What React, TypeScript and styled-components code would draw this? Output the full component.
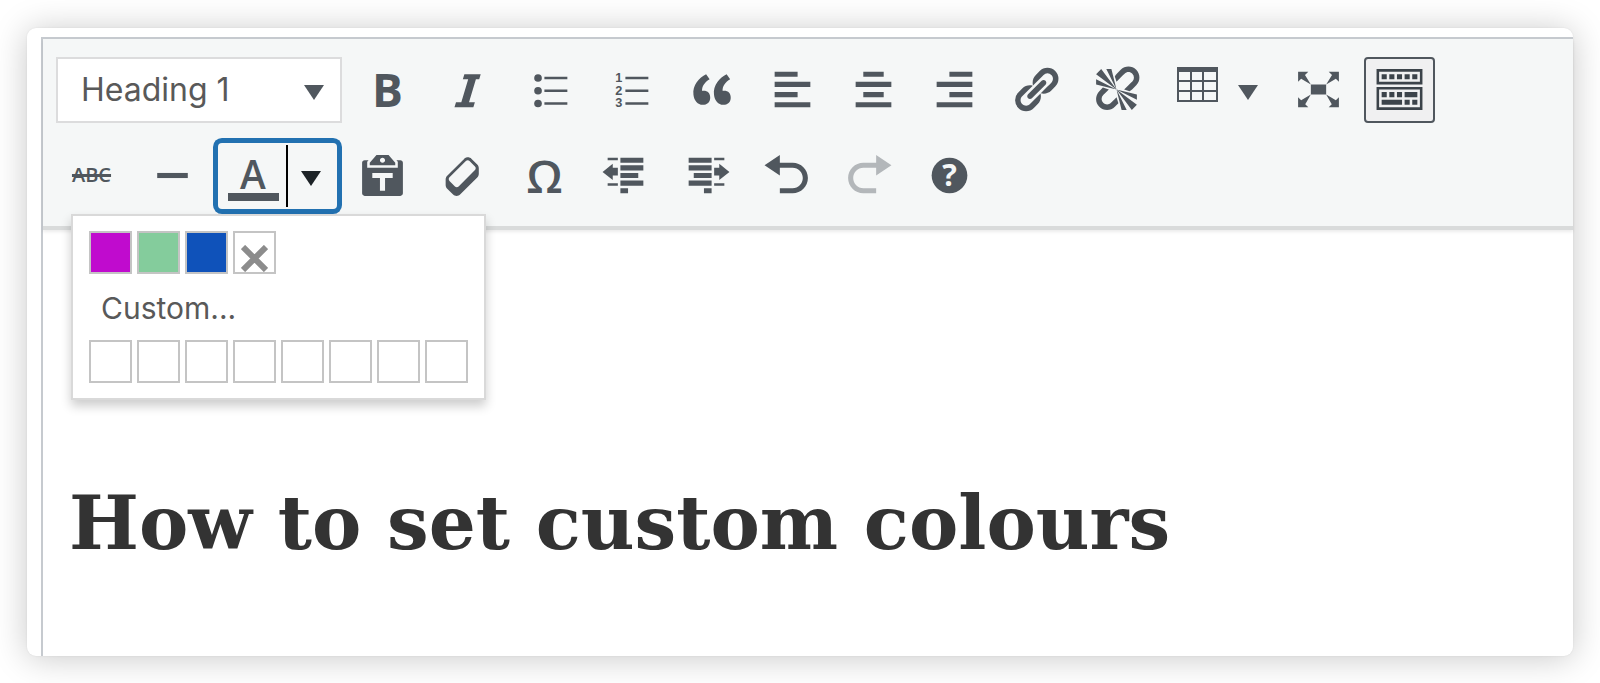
import React from "react";
import styled, { createGlobalStyle } from "styled-components";

const ink = "#50575e";

const GlobalStyle = createGlobalStyle`
  * { box-sizing: border-box; }
  body {
    margin: 0;
    background: #fff;
    font-family: Inter, "Liberation Sans", sans-serif;
  }
`;

const Page = styled.main`
  padding: 28px 27px 27px;
`;

const Card = styled.section`
  padding: 9px 0 0 14px;
  border-radius: 9px;
  background: #fff;
  box-shadow: 0 2px 34px rgba(0, 0, 0, 0.22), 0 0 2px rgba(0, 0, 0, 0.08);
`;

const Editor = styled.div`
  border: solid #c6cacf;
  border-width: 2px 0 0 2px;
`;

const Toolbar = styled.div`
  position: relative;
  display: flex;
  flex-direction: column;
  gap: 20px;
  padding: 18px 13px 17px;
  background: #f5f7f7;
  border-bottom: 4px solid #d9dbdb;
  box-shadow: 0 2px 3px rgba(0, 0, 0, 0.08);
`;

const Row = styled.div`
  display: flex;
  gap: 10px;
`;

const FormatBox = styled.div`
  position: relative;
  width: 286px;
  height: 66px;

  svg {
    position: absolute;
    right: 18px;
    top: 24px;
    pointer-events: none;
  }
`;

const FormatSelect = styled.select`
  width: 100%;
  height: 100%;
  padding: 0 50px 2px 23px;
  appearance: none;
  border: 2px solid #dcdcdd;
  border-radius: 0;
  background: #fff;
  color: #595959;
  font-family: inherit;
  font-size: 32px;
`;

const ToolButton = styled.button<{ $active?: boolean }>`
  display: flex;
  flex: none;
  align-items: flex-start;
  justify-content: center;
  width: 71px;
  height: 66px;
  padding: ${(p) => (p.$active ? 5 : 7)}px 0 0;
  border: ${(p) => (p.$active ? `2px solid ${ink}` : "none")};
  border-radius: 4px;
  background: ${(p) => (p.$active ? "#f0f0f1" : "transparent")};
  color: ${(p) => (p.$active ? "#3c434a" : ink)};

  &:disabled {
    color: #b3b7ba;
  }
`;

const LetterButton = styled(ToolButton)<{ $size: number; $weight: number }>`
  align-items: center;
  padding: 0;
  font-family: "Open Sans", "Noto Sans", sans-serif;
  font-size: ${(p) => p.$size}px;
  font-weight: ${(p) => p.$weight};
  line-height: 64px;
  padding-bottom: 2px;
`;

const Strike = styled.s`
  text-decoration-thickness: 3px;
`;

const MenuButton = styled(ToolButton)`
  align-items: center;
  gap: 20px;
  width: 111px;
  padding: 0;
`;

const SplitButton = styled.div`
  display: flex;
  align-items: center;
  width: 119px;
  height: 66px;
  border-radius: 4px;
  box-shadow: 0 0 0 5px #2271b1;
`;

const ColorButton = styled.button`
  display: flex;
  flex-direction: column;
  align-items: center;
  width: 70px;
  height: 62px;
  padding: 10px 0 0 2px;
  border: none;
  border-right: 2px solid #000;
  background: none;
  color: ${ink};
  font-family: "Open Sans", "Noto Sans", sans-serif;
  font-size: 39px;
  font-weight: 600;
  line-height: 38px;
`;

const ColorBar = styled.span`
  width: 51px;
  height: 8px;
  background: ${ink};
`;

const CaretButton = styled.button`
  flex: 1;
  height: 62px;
  padding: 0 4px 0 0;
  border: none;
  background: none;
  color: #1d2327;
  display: flex;
  align-items: center;
  justify-content: center;
`;

const Popup = styled.div`
  position: absolute;
  top: 175px;
  left: 28px;
  padding: 15px 16px;
  border: 2px solid #d9d9d9;
  background: #fff;
  box-shadow: 0 6px 10px rgba(0, 0, 0, 0.2);
`;

const SwatchRow = styled.div`
  display: flex;
  gap: 5px;
`;

const Swatch = styled.button<{ $color?: string }>`
  display: flex;
  align-items: flex-end;
  justify-content: center;
  width: 43px;
  height: 43px;
  padding: 0;
  border: 2px solid #c4c4c4;
  background: ${(p) => p.$color ?? "#fff"};
`;

const CustomButton = styled.button`
  display: block;
  height: 66px;
  padding: 2px 12px 0;
  border: none;
  background: none;
  color: #595959;
  font-family: inherit;
  font-size: 30px;
`;

const Content = styled.article`
  padding: 238px 26px 78px;
`;

const Title = styled.h1`
  margin: 0;
  color: #333;
  font-family: "DejaVu Serif", Georgia, serif;
  font-size: 74px;
  font-weight: 700;
  line-height: 110px;
`;

const Icon = ({ children }: { children: React.ReactNode }) => (
  <svg width="51" height="51" viewBox="0 0 20 20" fill="currentColor" aria-hidden="true">
    {children}
  </svg>
);

const Caret = ({ color = "currentColor" }: { color?: string }) => (
  <svg width="20" height="19" viewBox="0 0 20 19" fill={color} aria-hidden="true">
    <path d="M0 4h20L10 19z" />
  </svg>
);

type Tool = { label: string; icon: React.ReactNode; active?: boolean; disabled?: boolean };

const formatTools: Tool[] = [
  {
    label: "Italic",
    icon: <path d="M14.78 4h-6.4l-.6 2h2.1l-2.7 9H5.1l-.6 2h7.4l.6-2h-2.3l2.7-9h1.3z" />,
  },
  {
    label: "Bulleted list",
    icon: (
      <>
        <circle cx="5.5" cy="5.5" r="1.5" />
        <circle cx="5.5" cy="10.5" r="1.5" />
        <circle cx="5.5" cy="15.5" r="1.5" />
        <path d="M8 5h9v1H8zM8 10h9v1H8zM8 15h9v1H8z" />
      </>
    ),
  },
  {
    label: "Numbered list",
    icon: (
      <>
        <g fontFamily="Liberation Sans, sans-serif" fontSize="5" fontWeight="700" textAnchor="middle">
          <text x="5.4" y="7">1</text>
          <text x="5.4" y="12">2</text>
          <text x="5.4" y="17">3</text>
        </g>
        <path d="M8 5h9v1H8zM8 10h9v1H8zM8 15h9v1H8z" />
      </>
    ),
  },
  {
    label: "Blockquote",
    icon: (
      <path d="M9.49 13.22c0-.74-.2-1.38-.61-1.9-.62-.78-1.83-.88-2.53-.72-.29-1.65 1.11-3.75 2.92-4.65L7.88 4c-2.73 1.3-5.42 4.28-4.96 8.05C3.21 14.43 4.59 16 6.54 16c.85 0 1.56-.25 2.12-.75s.83-1.18.83-2.03zm8.05 0c0-.74-.2-1.38-.61-1.9-.63-.78-1.83-.88-2.53-.72-.29-1.65 1.11-3.75 2.92-4.65L15.93 4c-2.73 1.3-5.41 4.28-4.95 8.05.29 2.38 1.66 3.95 3.61 3.95.85 0 1.56-.25 2.12-.75s.83-1.18.83-2.03z" />
    ),
  },
  { label: "Align left", icon: <path d="M12 5V3H3v2h9zm5 4V7H3v2h14zm-5 4v-2H3v2h9zm5 4v-2H3v2h14z" /> },
  { label: "Align center", icon: <path d="M14 5V3H6v2h8zm3 4V7H3v2h14zm-3 4v-2H6v2h8zm3 4v-2H3v2h14z" /> },
  { label: "Align right", icon: <path d="M17 5V3H8v2h9zm0 4V7H3v2h14zm0 4v-2H8v2h9zm0 4v-2H3v2h14z" /> },
  {
    label: "Insert link",
    icon: (
      <path d="M17.74 2.76a4.321 4.321 0 0 1 0 6.1l-1.53 1.52c-1.12 1.12-2.7 1.47-4.14 1.09l2.62-2.61.76-.77.76-.76c.84-.84.84-2.2 0-3.04a2.13 2.13 0 0 0-3.04 0l-.77.76-3.38 3.38c-.37-1.44-.02-3.02 1.1-4.14l1.52-1.53a4.321 4.321 0 0 1 6.1 0zM8.59 13.43l5.34-5.34c.42-.42.42-1.1 0-1.52-.44-.43-1.13-.39-1.53 0l-5.33 5.34c-.42.42-.42 1.1 0 1.52.44.43 1.13.39 1.52 0zm-.76 2.29l4.14-4.15c.38 1.44.03 3.02-1.09 4.14l-1.52 1.53a4.321 4.321 0 0 1-6.1 0 4.321 4.321 0 0 1 0-6.1l1.53-1.52c1.12-1.12 2.7-1.47 4.14-1.1l-4.14 4.15c-.85.84-.85 2.2 0 3.05.84.84 2.2.84 3.04 0z" />
    ),
  },
  {
    label: "Remove link",
    icon: (
      <path d="M17.74 2.26c1.68 1.69 1.68 4.41 0 6.1l-1.53 1.52c-.32.33-.69.58-1.08.77L13 10l1.69-1.64.76-.77.76-.76c.84-.84.84-2.2 0-3.04-.84-.85-2.2-.85-3.04 0l-.77.76-.76.76L10 7l-.65-2.14c.19-.38.44-.75.77-1.07l1.52-1.53c1.69-1.68 4.42-1.68 6.1 0zM2 4l8 6-6-8zm4-2l4 8-2-8H6zM2 6l8 4-8-2V6zm7.36 7.69L10 13l.74 2.35-1.38 1.39c-1.69 1.68-4.41 1.68-6.1 0-1.68-1.68-1.68-4.42 0-6.1l1.39-1.38L7 10l-.69.64-1.52 1.53c-.85.84-.85 2.2 0 3.04.84.85 2.2.85 3.04 0zM18 16l-8-6 6 8zm-4 2l-4-8 2 8h2zm4-4l-8-4 8 2v2z" />
    ),
  },
];

const viewTools: Tool[] = [
  {
    label: "Fullscreen",
    icon: (
      <path d="M7 8h6v4H7zm-5 5v4h4l-1.2-1.2L7 12l-3.8 2.2M14 17h4v-4l-1.2 1.2L13 12l2.2 3.8M14 3l1.3 1.3L13 8l3.8-2.2L18 7V3M6 3H2v4l1.2-1.2L7 8 4.7 4.3" />
    ),
  },
  {
    label: "Toolbar toggle",
    active: true,
    icon: (
      <path d="M19 2v6H1V2h18zm-1 5V3H2v4h16zM5 4v2H3V4h2zm3 0v2H6V4h2zm3 0v2H9V4h2zm3 0v2h-2V4h2zm3 0v2h-2V4h2zm2 5v9H1V9h18zm-1 8v-7H2v7h16zM5 11v2H3v-2h2zm3 0v2H6v-2h2zm3 0v2H9v-2h2zm6 0v2h-5v-2h5zm-6 3v2H3v-2h8zm3 0v2h-2v-2h2zm3 0v2h-2v-2h2z" />
    ),
  },
];

const clipboardTools: Tool[] = [
  {
    label: "Paste as text",
    icon: (
      <path d="M12.38 2L15 5v1H5V5l2.64-3h4.74zM10 5c.55 0 1-.44 1-1 0-.55-.45-1-1-1s-1 .45-1 1c0 .56.45 1 1 1zm5.45-1H17c.55 0 1 .45 1 1v12c0 .56-.45 1-1 1H3c-.55 0-1-.44-1-1V5c0-.55.45-1 1-1h1.55L4 4.63V7h12V4.63zM14 11V9H6v2h3v5h2v-5h3z" />
    ),
  },
  {
    label: "Clear formatting",
    icon: (
      <path d="M14.29 4.59l1.1 1.11c.41.4.61.94.61 1.47v2.12c0 .53-.2 1.07-.61 1.47l-6.63 6.63c-.4.41-.94.61-1.47.61s-1.07-.2-1.47-.61l-1.11-1.1-1.1-1.11c-.41-.4-.61-.94-.61-1.47v-2.12c0-.54.2-1.07.61-1.48l6.63-6.62c.4-.41.94-.61 1.47-.61s1.06.2 1.47.61zm-6.21 9.7l6.42-6.42c.39-.39.39-1.03 0-1.43L12.36 4.3c-.19-.19-.45-.29-.72-.29s-.52.1-.71.29l-6.42 6.42c-.39.4-.39 1.04 0 1.43l2.14 2.14c.38.38 1.04.38 1.43 0z" />
    ),
  },
];

const historyTools: Tool[] = [
  {
    label: "Decrease indent",
    icon: (
      <path d="M3 3h4v1H3zM3 13h4v1H3zM5 5.4V7h2v3H5v1.8L1 8.6zM8 3h9v2H8zM8 6h9v2H8zM8 9h7v2H8zM8 12h9v2H8zM8 15h3v2H8z" />
    ),
  },
  {
    label: "Increase indent",
    icon: (
      <path d="M13 3h4v1h-4zM13 13h4v1h-4zM15 5.4V7h-2v3h2v1.8l4-3.2zM3 3h9v2H3zM3 6h9v2H3zM5 9h7v2H5zM3 12h9v2H3zM9 15h3v2H9z" />
    ),
  },
  { label: "Undo", icon: <path d="M12 5H7V2L1 6l6 4V7h5c2.2 0 4 1.8 4 4s-1.8 4-4 4H7v2h5c3.3 0 6-2.7 6-6s-2.7-6-6-6z" /> },
  {
    label: "Redo",
    disabled: true,
    icon: <path d="M8 5h5V2l6 4-6 4V7H8c-2.2 0-4 1.8-4 4s1.8 4 4 4h5v2H8c-3.3 0-6-2.7-6-6s2.7-6 6-6z" />,
  },
  {
    label: "Keyboard shortcuts",
    icon: (
      <>
        <circle cx="10" cy="10" r="7" />
        <text x="10" y="14.3" fill="#f5f7f7" fontFamily="Open Sans, sans-serif" fontSize="12" fontWeight="700" textAnchor="middle">
          ?
        </text>
      </>
    ),
  },
];

const Tools = ({ items }: { items: Tool[] }) => (
  <>
    {items.map((t) => (
      <ToolButton key={t.label} type="button" aria-label={t.label} $active={t.active} disabled={t.disabled}>
        <Icon>{t.icon}</Icon>
      </ToolButton>
    ))}
  </>
);

const colors = [
  { name: "Magenta", value: "#c00bce" },
  { name: "Green", value: "#84cc9c" },
  { name: "Blue", value: "#0f52ba" },
];

export default function App() {
  return (
    <Page>
      <GlobalStyle />
      <Card>
        <Editor>
          <Toolbar role="toolbar" aria-label="Formatting">
            <Row>
              <FormatBox>
                <FormatSelect aria-label="Block format" defaultValue="Heading 1">
                  <option>Heading 1</option>
                </FormatSelect>
                <Caret color={ink} />
              </FormatBox>
              <LetterButton type="button" aria-label="Bold" $size={46} $weight={700}>
                B
              </LetterButton>
              <Tools items={formatTools} />
              <MenuButton type="button" aria-label="Table">
                <svg width="41" height="46" viewBox="0 0 41 46" fill="currentColor" aria-hidden="true">
                  <path
                    fillRule="evenodd"
                    d="M0 0h41v35H0zM2 5v8h11V5zM15 5v8h10V5zM27 5v8h12V5zM2 15v8h11v-8zM15 15v8h10v-8zM27 15v8h12v-8zM2 25v8h11v-8zM15 25v8h10v-8zM27 25v8h12v-8z"
                  />
                </svg>
                <Caret />
              </MenuButton>
              <Tools items={viewTools} />
            </Row>
            <Row>
              <LetterButton type="button" aria-label="Strikethrough" $size={20} $weight={600}>
                <Strike>ABC</Strike>
              </LetterButton>
              <Tools items={[{ label: "Horizontal line", icon: <path d="M4 9h12v2H4z" /> }]} />
              <SplitButton>
                <ColorButton type="button" aria-label="Text color">
                  A
                  <ColorBar />
                </ColorButton>
                <CaretButton type="button" aria-label="Choose text color" aria-expanded="true">
                  <Caret />
                </CaretButton>
              </SplitButton>
              <Tools items={clipboardTools} />
              <LetterButton type="button" aria-label="Special character" $size={46} $weight={600}>
                Ω
              </LetterButton>
              <Tools items={historyTools} />
            </Row>
            <Popup role="dialog" aria-label="Text color">
              <SwatchRow>
                {colors.map((c) => (
                  <Swatch key={c.name} type="button" aria-label={c.name} $color={c.value} />
                ))}
                <Swatch type="button" aria-label="No color">
                  <svg width="27" height="27" viewBox="0 0 27 27" stroke="#8c8c8c" strokeWidth="6" aria-hidden="true">
                    <path d="M2 2l23 23M25 2L2 25" />
                  </svg>
                </Swatch>
              </SwatchRow>
              <CustomButton type="button">Custom...</CustomButton>
              <SwatchRow>
                {Array.from({ length: 8 }, (_, i) => (
                  <Swatch key={i} type="button" aria-label={`Custom color ${i + 1}`} />
                ))}
              </SwatchRow>
            </Popup>
          </Toolbar>
          <Content>
            <Title>How to set custom colours</Title>
          </Content>
        </Editor>
      </Card>
    </Page>
  );
}
